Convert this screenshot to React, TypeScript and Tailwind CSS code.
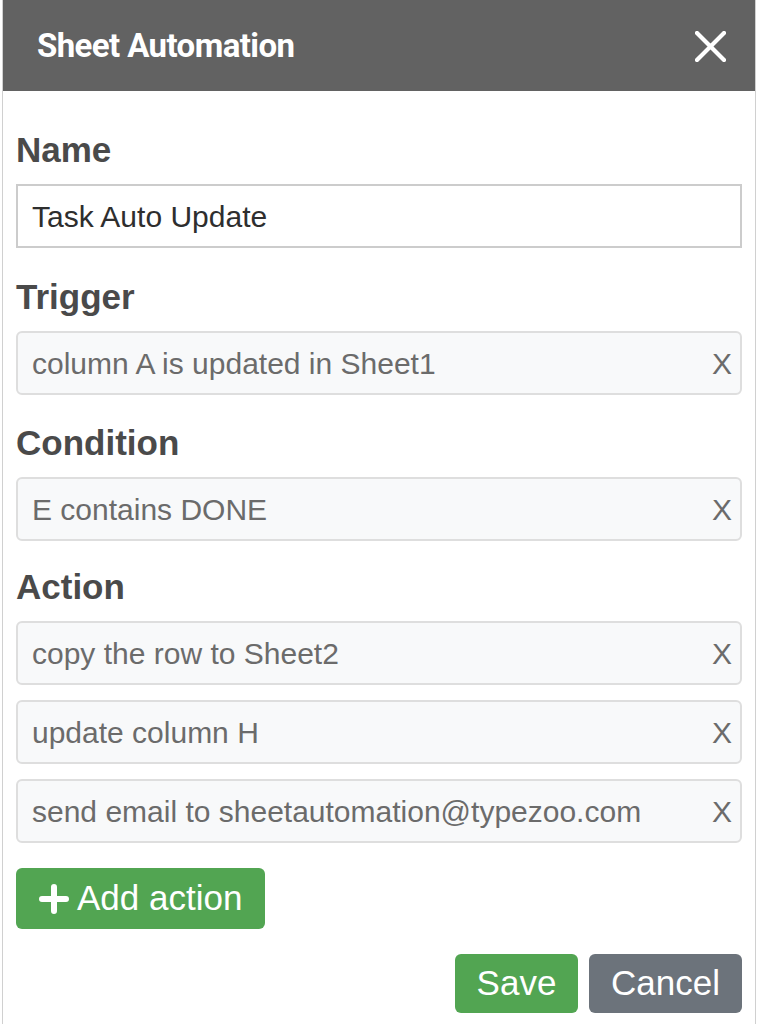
const font = { fontFamily: '"Liberation Sans", Arial, sans-serif' };

function Field({ text }: { text: string }) {
  return (
    <div className="flex h-16 items-center justify-between rounded-[6px] border-2 border-[#dedede] bg-[#f8f9fa] pl-[14px] pr-[8px]">
      <span className="text-[30px] text-[#6b6b6b]">{text}</span>
      <span className="text-[30px] text-[#6b6b6b]">X</span>
    </div>
  );
}

function Label({ children }: { children: string }) {
  return <h3 className="mb-4 h-9 text-[35px] font-bold leading-9 text-[#4a4a4a]">{children}</h3>;
}

export default function App() {
  return (
    <div className="min-h-[1024px] bg-white" style={font}>
      <div className="ml-[2px] min-h-[1024px] w-[754px] border-x border-[#d0d0d0]">
        {/* header */}
        <div className="flex h-[91px] items-center justify-between bg-[#626262] pl-[34px] pr-[29px]">
          <h2
            className="text-[33px] font-bold tracking-[-0.6px] text-white"
            style={{ fontFamily: "Roboto, sans-serif" }}
          >
            Sheet Automation
          </h2>
          <svg width="31" height="31" viewBox="0 0 31 31" className="mt-[1px]">
            <path d="M2 2 L29 29 M29 2 L2 29" stroke="white" strokeWidth="4.2" strokeLinecap="square" />
          </svg>
        </div>

        <div className="px-[13px] pt-[41px]">
          <Label>Name</Label>
          <div className="flex h-16 items-center border-2 border-[#cccccc] bg-white pl-[14px]">
            <span className="text-[30px] text-[#2e2e2e]">Task Auto Update</span>
          </div>

          <div className="mt-[31px]">
            <Label>Trigger</Label>
            <Field text="column A is updated in Sheet1" />
          </div>

          <div className="mt-[30px]">
            <Label>Condition</Label>
            <Field text="E contains DONE" />
          </div>

          <div className="mt-[28px]">
            <Label>Action</Label>
            <div className="flex flex-col gap-[15px]">
              <Field text="copy the row to Sheet2" />
              <Field text="update column H" />
              <Field text="send email to sheetautomation@typezoo.com" />
            </div>
          </div>

          <button className="mt-[25px] flex h-[61px] w-[249px] items-center gap-[8px] rounded-[6px] bg-[#52a552] pl-[23px] text-[35px] text-white">
            <svg width="30" height="30" viewBox="0 0 30 30">
              <path d="M15 3 V27 M3 15 H27" stroke="white" strokeWidth="6" strokeLinecap="round" />
            </svg>
            Add action
          </button>

          <div className="mt-[25px] flex justify-end gap-[11px]">
            <button className="h-[59px] w-[123px] rounded-[6px] bg-[#52a552] text-[35px] text-white">Save</button>
            <button className="h-[59px] w-[153px] rounded-[6px] bg-[#6c737b] text-[35px] text-white">Cancel</button>
          </div>
        </div>
      </div>
    </div>
  );
}
